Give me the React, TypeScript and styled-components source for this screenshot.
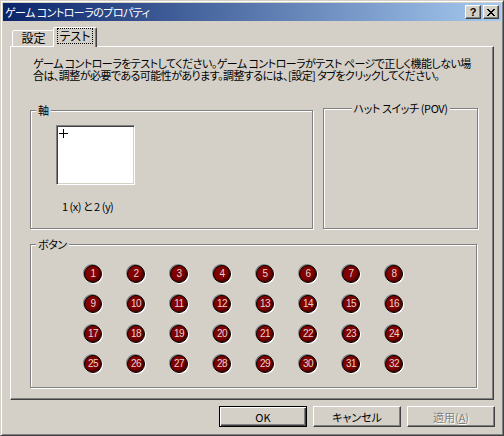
import styled, { createGlobalStyle } from "styled-components";

const GlobalStyle = createGlobalStyle`
  html, body {
    margin: 0;
    padding: 0;
    background: #d4d0c8;
  }
  body {
    font-family: "Noto Sans CJK JP", "Noto Sans", sans-serif;
    font-size: 12px;
    font-feature-settings: "palt" 1;
    color: #000;
  }
`;

const Window = styled.div`
  width: 504px;
  height: 436px;
  box-sizing: border-box;
  background: #d4d0c8;
  border: 1px solid;
  border-color: #d4d0c8 #404040 #404040 #d4d0c8;
  box-shadow: inset 1px 1px 0 #fff, inset -1px -1px 0 #808080;
  padding: 2px;
  display: flex;
  flex-direction: column;
  overflow: hidden;
`;

const TitleBar = styled.div`
  height: 18px;
  display: flex;
  align-items: center;
  padding: 0 2px 0 2px;
  background: linear-gradient(to right, #0a246a, #a6caf0);
  color: #fff;
`;

const Title = styled.span`
  flex: 1;
  font-size: 11px;
  letter-spacing: -0.55px;
  line-height: 18px;
  white-space: nowrap;
`;

const CaptionButton = styled.div<{ $gap?: number }>`
  width: 16px;
  height: 14px;
  box-sizing: border-box;
  margin-left: ${(p) => p.$gap ?? 0}px;
  background: #d4d0c8;
  border: 1px solid;
  border-color: #fff #404040 #404040 #fff;
  box-shadow: inset -1px -1px 0 #808080;
  display: flex;
  align-items: center;
  justify-content: center;
  color: #000;
  font-family: "Liberation Sans", sans-serif;
  font-weight: bold;
  font-size: 11px;
  line-height: 12px;
`;

const Body = styled.div`
  flex: 1;
  min-width: 0;
  display: flex;
  flex-direction: column;
  padding: 7px 7px 6px 7px;
`;

const TabRow = styled.div`
  height: 18px;
  display: flex;
  align-items: flex-end;
  padding-left: 2px;
`;

const Tab = styled.div<{ $active?: boolean; $w: number }>`
  width: ${(p) => p.$w}px;
  box-sizing: border-box;
  height: ${(p) => (p.$active ? 20 : 16)}px;
  margin: 0 ${(p) => (p.$active ? -2 : 0)}px ${(p) => (p.$active ? -1 : 0)}px;
  position: relative;
  z-index: ${(p) => (p.$active ? 2 : 1)};
  background: #d4d0c8;
  border: 1px solid;
  border-bottom: none;
  border-color: #fff #404040 transparent #fff;
  border-top-left-radius: 2px;
  border-top-right-radius: 2px;
  box-shadow: inset -1px 0 0 #808080;
  display: flex;
  justify-content: center;
  padding-top: ${(p) => (p.$active ? 1 : 0)}px;
  font-size: 12px;
  line-height: 14px;
`;

const FocusLabel = styled.span`
  outline: 1px dotted #000;
  padding: 0 2px;
  height: 14px;
`;

const Panel = styled.div`
  height: 354px;
  min-width: 0;
  box-sizing: border-box;
  border: 1px solid;
  border-color: #fff #404040 #404040 #fff;
  box-shadow: inset -1px -1px 0 #808080;
  padding: 10px 14px 0 19px;
  display: flex;
  flex-direction: column;
`;

const Description = styled.p`
  margin: 0 0 0 3px;
  font-size: 11px;
  line-height: 12px;
  white-space: nowrap;
  letter-spacing: -0.55px;
`;

const GroupRow = styled.div`
  display: flex;
  align-items: flex-end;
  gap: 10px;
  margin-top: 27px;
`;

const Group = styled.div<{ $w: number; $h: number }>`
  position: relative;
  width: ${(p) => p.$w}px;
  height: ${(p) => p.$h}px;
  flex: none;
  box-sizing: border-box;
  border: 1px solid #808080;
  box-shadow: inset 1px 1px 0 #fff, 1px 1px 0 #fff;
`;

const Caption = styled.span<{ $center?: boolean }>`
  position: absolute;
  top: -8px;
  left: ${(p) => (p.$center ? "50%" : "5px")};
  transform: ${(p) => (p.$center ? "translateX(-50%)" : "none")};
  padding: 0 2px;
  background: #d4d0c8;
  font-size: 11px;
  letter-spacing: -0.4px;
  line-height: 14px;
  white-space: nowrap;
`;

const AxisArea = styled.div`
  display: flex;
  flex-direction: column;
  padding: 14px 0 0 25px;
`;

const AxisBox = styled.div`
  position: relative;
  width: 79px;
  height: 60px;
  box-sizing: border-box;
  background: #fff;
  border: 1px solid;
  border-color: #808080 #fff #fff #808080;
  box-shadow: inset 1px 1px 0 #404040, inset -1px -1px 0 #d4d0c8;
`;

const Crosshair = styled.svg`
  position: absolute;
  left: 2px;
  top: 3px;
`;

const AxisLabel = styled.div`
  margin: 14px 0 0 6px;
  line-height: 14px;
  font-size: 11px;
  letter-spacing: -0.5px;
`;

const ButtonGroup = styled(Group)`
  margin-top: 15px;
`;

const Grid = styled.div`
  display: grid;
  grid-template-columns: repeat(8, 18px);
  grid-auto-rows: 18px;
  column-gap: 25px;
  row-gap: 12px;
  padding: 20px 0 0 53px;
`;

const Dot = styled.div`
  width: 18px;
  height: 18px;
  box-sizing: border-box;
  border-radius: 50%;
  background: #800000;
  border: 1px solid #000;
  box-shadow: -1px -1px 0 #808080, 1px 1px 0 #fff,
    inset -2px -2px 1px rgba(0, 0, 0, 0.35);
  display: flex;
  align-items: center;
  justify-content: center;
  color: #e4d4d4;
  font-family: "Liberation Sans", sans-serif;
  font-size: 10px;
  line-height: 10px;
  letter-spacing: -0.5px;
`;

const Footer = styled.div`
  display: flex;
  justify-content: flex-end;
  gap: 6px;
  margin-top: 6px;
  margin-right: -1px;
`;

const DialogButton = styled.div<{ $default?: boolean; $disabled?: boolean }>`
  width: 88px;
  height: 21px;
  box-sizing: border-box;
  border: 1px solid;
  border-color: ${(p) => (p.$default ? "#000" : "#fff #404040 #404040 #fff")};
  box-shadow: ${(p) =>
    p.$default
      ? "inset 1px 1px 0 #fff, inset -1px -1px 0 #404040, inset -2px -2px 0 #808080"
      : "inset -1px -1px 0 #808080"};
  display: flex;
  align-items: center;
  justify-content: center;
  font-size: 11px;
  line-height: 14px;
  color: ${(p) => (p.$disabled ? "#808080" : "#000")};
  text-shadow: ${(p) => (p.$disabled ? "1px 1px 0 #fff" : "none")};
`;

const Underline = styled.span`
  text-decoration: underline;
`;

const buttons = Array.from({ length: 32 }, (_, i) => i + 1);

export default function App() {
  return (
    <>
      <GlobalStyle />
      <Window>
        <TitleBar>
          <Title>ゲーム コントローラのプロパティ</Title>
          <CaptionButton>?</CaptionButton>
          <CaptionButton $gap={2}>
            <svg width="8" height="7" viewBox="0 0 8 7">
              <path d="M0 0 L7 7 M1 0 L8 7 M7 0 L0 7 M8 0 L1 7" stroke="#000" strokeWidth="1" />
            </svg>
          </CaptionButton>
        </TitleBar>
        <Body>
          <TabRow>
            <Tab $w={43}>設定</Tab>
            <Tab $w={44} $active>
              <FocusLabel>テスト</FocusLabel>
            </Tab>
          </TabRow>
          <Panel>
            <Description>
              ゲーム コントローラをテストしてください。ゲーム コントローラがテスト ページで正しく機能しない場
              <br />
              合は、調整が必要である可能性があります。調整するには、[設定] タブをクリックしてください。
            </Description>
            <GroupRow>
              <Group $w={283} $h={119}>
                <Caption>軸</Caption>
                <AxisArea>
                  <AxisBox>
                    <Crosshair width="9" height="9" viewBox="0 0 9 9">
                      <path d="M0 4.5 H9 M4.5 0 V9" stroke="#000" strokeWidth="1" />
                    </Crosshair>
                  </AxisBox>
                  <AxisLabel>1 (x) と 2 (y)</AxisLabel>
                </AxisArea>
              </Group>
              <Group $w={155} $h={121}>
                <Caption $center>ハット スイッチ (POV)</Caption>
              </Group>
            </GroupRow>
            <ButtonGroup $w={447} $h={144}>
              <Caption>ボタン</Caption>
              <Grid>
                {buttons.map((n) => (
                  <Dot key={n}>{n}</Dot>
                ))}
              </Grid>
            </ButtonGroup>
          </Panel>
          <Footer>
            <DialogButton $default>OK</DialogButton>
            <DialogButton>キャンセル</DialogButton>
            <DialogButton $disabled>
              適用(<Underline>A</Underline>)
            </DialogButton>
          </Footer>
        </Body>
      </Window>
    </>
  );
}
